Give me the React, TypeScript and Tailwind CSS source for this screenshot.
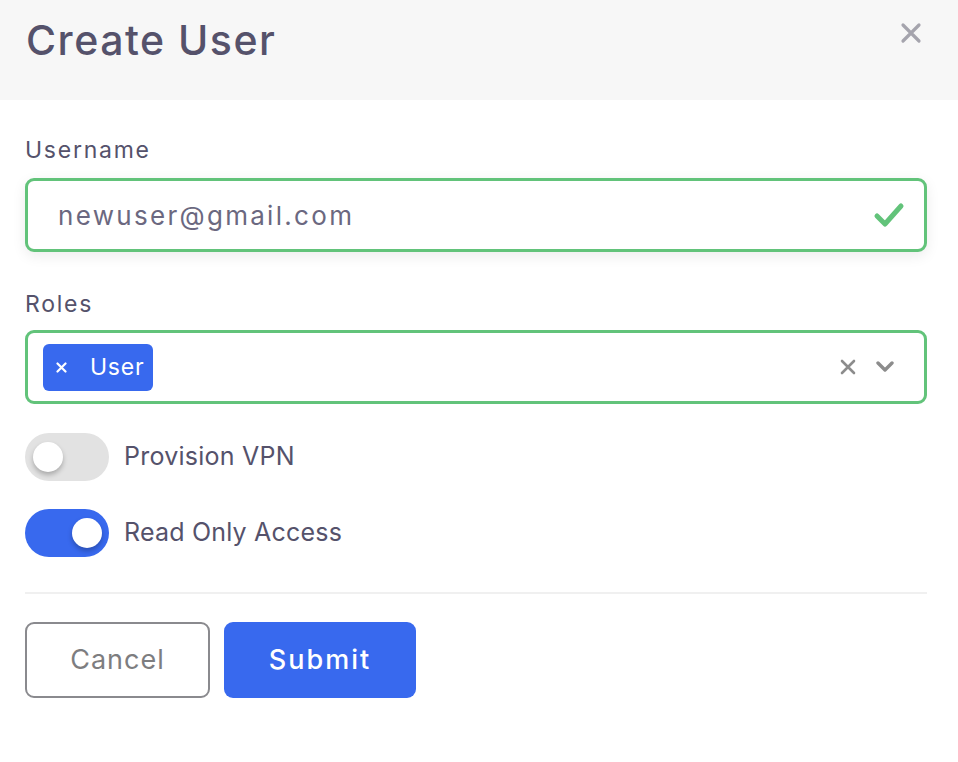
import { useState } from "react";

const font = { fontFamily: "Inter, 'Open Sans', sans-serif" };

function Toggle({ on, onClick }: { on: boolean; onClick: () => void }) {
  return (
    <button
      onClick={onClick}
      className={`relative h-[48px] w-[84px] shrink-0 rounded-full ${
        on ? "bg-[#3869ee]" : "bg-[#e2e2e2]"
      }`}
    >
      <span
        className={`absolute top-[9px] h-[30px] w-[30px] rounded-full bg-white shadow-[0_3px_5px_rgba(0,0,0,0.25)] ${
          on ? "left-[47px]" : "left-[8px]"
        }`}
      />
    </button>
  );
}

export default function App() {
  const [vpn, setVpn] = useState(false);
  const [readOnly, setReadOnly] = useState(true);

  return (
    <div className="min-h-[762px] w-[958px] bg-white text-[#55526b]" style={font}>
      {/* Header */}
      <div className="flex h-[100px] items-start justify-between bg-[#f7f7f7] pl-[26px] pr-[36px]">
        <h1 className="mt-[16px] text-[41px] font-medium leading-[48px] tracking-[1.5px] text-[#55526b]">
          Create User
        </h1>
        <button className="mt-[22px] text-[#a5a4ad]">
          <svg width="22" height="22" viewBox="0 0 22 22">
            <path d="M3 3 L19 19 M19 3 L3 19" stroke="currentColor" strokeWidth="3.2" strokeLinecap="round" />
          </svg>
        </button>
      </div>

      <div className="pl-[25px] pr-[31px] pt-[36px]">
        {/* Username */}
        <label className="block text-[23px] leading-[28px] tracking-[1.75px] text-[#55526b]">Username</label>
        <div className="mt-[14px] flex h-[74px] items-center rounded-[9px] border-[3px] border-[#62c37a] bg-white pl-[30px] pr-[19px] shadow-[0_4px_14px_rgba(0,0,0,0.08)]">
          <span className="flex-1 text-[26px] tracking-[2.3px] text-[#6b6880]">newuser@gmail.com</span>
          <svg width="32" height="26" viewBox="0 0 32 26">
            <path d="M4 14 L12 22 L28 4" fill="none" stroke="#62c37a" strokeWidth="5" strokeLinecap="round" strokeLinejoin="round" />
          </svg>
        </div>

        {/* Roles */}
        <label className="mt-[38px] block text-[23px] leading-[28px] tracking-[1.75px] text-[#55526b]">Roles</label>
        <div className="mt-[12px] flex h-[74px] items-center rounded-[9px] border-[3px] border-[#62c37a] bg-white pl-[15px] pr-[30px]">
          <div className="flex h-[47px] items-center rounded-[6px] bg-[#3869ee] pl-[13px] pr-[9px] text-white">
            <svg width="11" height="11" viewBox="0 0 11 11">
              <path d="M1.5 1.5 L9.5 9.5 M9.5 1.5 L1.5 9.5" stroke="white" strokeWidth="2.2" strokeLinecap="round" />
            </svg>
            <span className="ml-[23px] text-[23px] leading-none tracking-[0.75px]">User</span>
          </div>
          <div className="flex-1" />
          <svg width="16" height="16" viewBox="0 0 16 16" className="mr-[20px]">
            <path d="M2 2 L14 14 M14 2 L2 14" stroke="#8c8c8c" strokeWidth="2.6" strokeLinecap="round" />
          </svg>
          <svg width="18" height="12" viewBox="0 0 18 12">
            <path d="M2 2 L9 9 L16 2" fill="none" stroke="#8c8c8c" strokeWidth="3.4" strokeLinecap="round" strokeLinejoin="round" />
          </svg>
        </div>

        {/* Toggles */}
        <div className="mt-[29px] flex items-center gap-[15px]">
          <Toggle on={vpn} onClick={() => setVpn(!vpn)} />
          <span className="text-[25px] tracking-[0.25px] text-[#55526b]">Provision VPN</span>
        </div>
        <div className="mt-[28px] flex items-center gap-[15px]">
          <Toggle on={readOnly} onClick={() => setReadOnly(!readOnly)} />
          <span className="text-[25px] tracking-[0.2px] text-[#55526b]">Read Only Access</span>
        </div>

        <div className="mt-[35px] h-[2px] bg-[#f0f0f0]" />

        {/* Buttons */}
        <div className="mt-[28px] flex gap-[14px]">
          <button className="h-[76px] w-[185px] rounded-[9px] border-2 border-[#8a8a8e] bg-white text-[27px] tracking-[1px] text-[#7d7d80]">
            Cancel
          </button>
          <button className="h-[76px] w-[192px] rounded-[9px] bg-[#3869ee] text-[27px] font-medium tracking-[2px] text-white">
            Submit
          </button>
        </div>
      </div>
    </div>
  );
}
